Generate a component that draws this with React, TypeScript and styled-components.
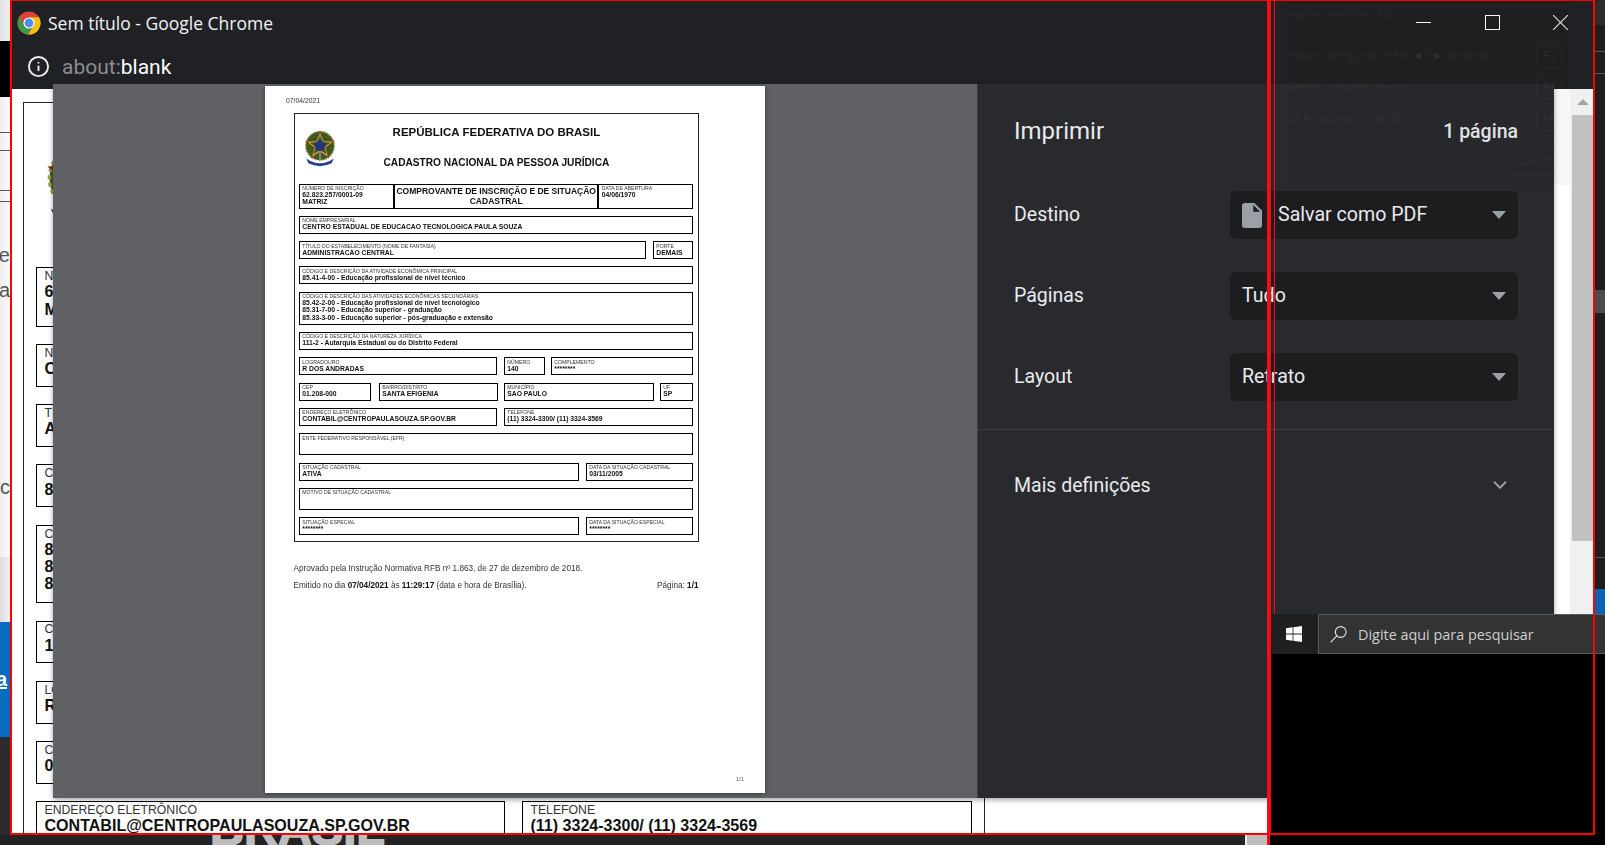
import React from 'react';
import styled, { createGlobalStyle } from 'styled-components';
import { ChevronDown, Info } from 'lucide-react';

const GlobalStyle = createGlobalStyle`
  html, body { margin: 0; padding: 0; background: #222; overflow: hidden; }
  * { box-sizing: border-box; }
`;

const Desktop = styled.div`
  position: relative;
  width: 1605px;
  height: 845px;
  overflow: hidden;
  background: #232323;
  font-family: "Liberation Sans", Arial, sans-serif;
`;

/* windows peeking out behind the chrome popup */
const LeftWindow = styled.div`
  position: absolute;
  left: 0;
  top: 0;
  width: 12px;
  height: 845px;
  display: flex;
  flex-direction: column;
  overflow: hidden;
`;

const LeftBand = styled.div<{ $h: number; $bg: string }>`
  flex: 0 0 ${(p) => p.$h}px;
  background: ${(p) => p.$bg};
`;

const LeftPage = styled.div`
  flex: 0 0 460px;
  background: linear-gradient(90deg, #eeeeee, #ffffff);
  display: flex;
  flex-direction: column;
  padding-top: 35px;
`;

const LeftRule = styled.div<{ $after: number }>`
  height: 1px;
  flex: none;
  background: #555;
  margin-bottom: ${(p) => p.$after}px;
`;

const LeftText = styled.div<{ $after: number }>`
  height: 24px;
  flex: none;
  width: 10px;
  display: flex;
  justify-content: flex-end;
  font-size: 20px;
  line-height: 24px;
  color: #555;
  white-space: nowrap;
  margin-bottom: ${(p) => p.$after}px;
`;

const LeftBlue = styled.div`
  flex: 0 0 115px;
  background: #0b6cbf;
  color: #fff;
  font-size: 20px;
  font-weight: 700;
  width: 100%;
  padding-top: 46px;
  display: flex;
  justify-content: flex-end;
  padding-right: 5px;
  text-decoration: underline;
`;

const RightWindow = styled.div`
  position: absolute;
  left: 1595px;
  top: 0;
  width: 10px;
  height: 614px;
  display: flex;
  flex-direction: column;
  background: #1e1e1e;
`;

const RightBand = styled.div<{ $h: number; $bg: string; $after?: number }>`
  flex: 0 0 ${(p) => p.$h}px;
  background: ${(p) => p.$bg};
  margin-bottom: ${(p) => p.$after ?? 0}px;
`;

const BottomStrip = styled.div`
  position: absolute;
  left: 0;
  top: 835px;
  width: 1270px;
  height: 10px;
  background: #232323;
  overflow: hidden;
  display: flex;
`;

const BrasilMark = styled.div`
  margin: -31px 0 0 210px;
  width: 1035px;
  flex: none;
  font-size: 47px;
  line-height: 50px;
  font-weight: 700;
  color: #bdbdbd;
  -webkit-text-stroke: 1.5px #bdbdbd;
`;

const BottomThumb = styled.div`
  flex: 1;
  background: #bdbdbd;
  border-left: 2px solid #eee;
`;

/* the chrome print popup */
const ChromeWindow = styled.div`
  position: absolute;
  left: 12px;
  top: 0;
  width: 1581px;
  height: 834px;
  display: flex;
  flex-direction: column;
  background: #202124;
  color: #e8eaed;
`;

const TitleBar = styled.div`
  flex: 0 0 45px;
  display: flex;
  align-items: center;
  padding-left: 5px;
  border-bottom: 1px solid #232427;
`;

const ChromeLogo = styled.svg`
  width: 24px;
  height: 24px;
  flex: none;
`;

const WindowTitle = styled.div`
  margin-left: 7px;
  font-family: "Open Sans", "Noto Sans", sans-serif;
  font-size: 17.5px;
  color: #f1f3f4;
  flex: 1;
`;

const WindowControls = styled.div`
  display: flex;
  margin-right: -2px;
`;

const ControlButton = styled.div`
  width: 68.5px;
  height: 45px;
  display: flex;
  align-items: center;
  justify-content: center;
  padding-bottom: 1px;
`;

const UrlBar = styled.div`
  flex: 0 0 43px;
  display: flex;
  align-items: center;
  padding-left: 15px;
  gap: 12px;
  padding-bottom: 2px;
`;

const UrlText = styled.div`
  font-family: Roboto, sans-serif;
  font-size: 21px;
  color: #8a8d91;
`;

const UrlHost = styled.span`
  color: #ffffff;
`;

const WindowBody = styled.div`
  flex: 1;
  position: relative;
  display: flex;
  min-height: 0;
`;

const DocumentPage = styled.div`
  flex: 1;
  background: #fff;
  overflow: hidden;
  padding: 13px 0 0 11px;
`;

const ScrollColumn = styled.div`
  flex: 0 0 23px;
  background: #f0f0f0;
  display: flex;
  flex-direction: column;
  align-items: flex-end;
`;

const ScrollArrow = styled.div`
  flex: 0 0 26px;
  width: 21px;
  display: flex;
  align-items: center;
  justify-content: center;
  &::before {
    content: '';
    border-left: 6px solid transparent;
    border-right: 6px solid transparent;
    border-bottom: 6px solid #a3a3a3;
  }
`;

const ScrollThumb = styled.div`
  flex: 0 0 426px;
  width: 21px;
  background: #c1c1c1;
`;

const PrintDialog = styled.div`
  position: absolute;
  left: 41px;
  top: -5px;
  width: 1501px;
  height: 714px;
  display: flex;
  box-shadow: 0 2px 5px rgba(0, 0, 0, 0.35);
`;

const PreviewPane = styled.div`
  flex: 0 0 924px;
  background: #5f6165;
  display: flex;
  justify-content: center;
  padding-top: 2px;
`;

const Sheet = styled.div`
  width: 500px;
  height: 707px;
  background: #fff;
  padding: 11px 0 0 21px;
  box-shadow: 0 1px 4px rgba(0, 0, 0, 0.4);
  color: #111;
  position: relative;
  filter: blur(0.35px);
`;

const SheetDate = styled.div`
  font-size: 6.8px;
  line-height: 8px;
  height: 16px;
  color: #333;
`;

const SheetFooter = styled.div`
  width: 406px;
  margin: 0 0 0 7.5px;
  font-size: 8.2px;
  color: #333;
`;

const FooterLine = styled.div`
  height: 17px;
  line-height: 17px;
  display: flex;
  justify-content: space-between;
  padding-right: 1px;
  b { color: #111; }
`;

const FooterGap = styled.div`
  height: 18px;
`;

const SheetNumber = styled.div`
  position: absolute;
  right: 21px;
  bottom: 11px;
  font-size: 6px;
  color: #666;
`;

const Sidebar = styled.div`
  flex: 1;
  background: #292a2d;
  border-left: 1px solid #3b3d41;
  padding-top: 23px;
  font-family: Roboto, sans-serif;
  color: #e8eaed;
  display: flex;
  flex-direction: column;
`;

const SidebarHeader = styled.div`
  height: 48px;
  display: flex;
  align-items: center;
  justify-content: space-between;
  padding: 0 36px;
`;

const SidebarTitle = styled.div`
  font-size: 24px;
`;

const PageCount = styled.div`
  font-size: 19.5px;
  font-weight: 500;
`;

const SettingsList = styled.div`
  margin-top: 36px;
  padding: 0 36px;
  display: flex;
  flex-direction: column;
  gap: 33px;
`;

const SettingRow = styled.div`
  height: 48px;
  display: grid;
  grid-template-columns: 216px 1fr;
  align-items: center;
  font-size: 19.5px;
`;

const SettingLabel = styled.div`
  padding-bottom: 2px;
`;

const SelectBox = styled.div`
  height: 48px;
  border-radius: 6px;
  background: #1d1d1f;
  display: flex;
  align-items: center;
  padding: 0 12px;
  font-size: 19.6px;
  color: #e8eaed;
`;

const FileIcon = styled.svg`
  width: 20px;
  height: 25px;
  margin-right: 16px;
  flex: none;
`;

const SelectText = styled.div`
  flex: 1;
  margin-bottom: 2px;
`;

const SelectArrow = styled.div`
  border-left: 7px solid transparent;
  border-right: 7px solid transparent;
  border-top: 8px solid #9aa0a6;
`;

const Divider = styled.div`
  height: 1px;
  margin-top: 28px;
  background: #3b3d41;
`;

const MoreRow = styled.div`
  height: 110px;
  display: flex;
  align-items: center;
  justify-content: space-between;
  padding: 0 43px 0 36px;
  font-size: 19.5px;
`;

/* the receipt, used for the page behind and for the preview sheet */
const FormBox = styled.div`
  --rule: 1px;
  --outer: 1.6px;
  --head: 69.6px;
  --box-w: 405.8px;
  --inset: 0px;
  --pad: 2.6px;
  width: var(--box-w);
  border: var(--outer) solid #222;
  margin-left: 7.5px;
  color: #111;
  height: 428.5px;
`;

const PageFormBox = styled(FormBox)`
  --rule: 0.42px;
  --outer: 0.84px;
  --head: 69px;
  --box-w: 404.4px;
  --inset: 0.8px;
  --pad: 3.2px;
  zoom: 2.38;
  margin-left: 0;
`;

const FormHead = styled.div`
  height: var(--head);
  display: grid;
  grid-template-columns: 48px 1fr 48px;
`;

const CoatOfArms = styled.svg`
  width: 34px;
  height: 36px;
  margin: 17px 0 0 8px;
`;

const FormTitle = styled.div`
  text-align: center;
  font-weight: 700;
  font-size: 11.5px;
  padding-top: 12px;
  line-height: 12px;
`;

const FormSubtitle = styled.div`
  margin-top: 19px;
  font-size: 10.15px;
`;

const FormRows = styled.div`
  width: 394px;
  margin-left: 4.2px;
  display: flex;
  flex-direction: column;
  gap: 7.3px;
`;

const FormRow = styled.div<{ $h: number }>`
  height: ${(p) => p.$h}px;
  display: flex;
`;

const FormField = styled.div<{ $w?: number; $gap?: number }>`
  flex: ${(p) => (p.$w ? `0 0 ${p.$w}px` : '1 1 0')};
  margin-left: ${(p) => p.$gap ?? 0}px;
  border: var(--rule) solid #000;
  padding: 0.4px 0 0 var(--pad);
  min-width: 0;
  overflow: hidden;
  &:first-child {
    flex: ${(p) => (p.$w ? `0 0 calc(${p.$w}px - var(--inset))` : '1 1 0')};
    margin-left: var(--inset);
  }
`;

const FieldLabel = styled.div`
  font-size: 5.15px;
  line-height: 6px;
  color: #333;
  white-space: nowrap;
`;

const FieldValue = styled.div`
  font-size: 6.75px;
  line-height: 7.2px;
  font-weight: 700;
  white-space: nowrap;
  color: #111;
`;

const ReceiptHeading = styled(FormField)`
  font-weight: 700;
  font-size: 8.5px;
  line-height: 10px;
  text-align: center;
  padding: 1.5px 0 0;
`;

const arms = (
  <CoatOfArms viewBox="0 0 32 34">
    <circle cx="16" cy="14" r="13.5" fill="#3d5a24" stroke="#a89a3c" strokeWidth="1.4" strokeDasharray="1.5 1.5" />
    <polygon points="16,0 19.5,9.1 29.3,9.7 21.7,15.9 24.2,25.3 16,20 7.8,25.3 10.3,15.9 2.7,9.7 12.5,9.1" fill="#c2a52e" stroke="#7a2f1c" strokeWidth="0.8" />
    <polygon points="16,4 18.6,10.5 25.5,11 20.2,15.2 22,21.8 16,18 10,21.8 11.8,15.2 6.5,11 13.4,10.5" fill="#2d5a2c" />
    <circle cx="16" cy="14" r="5" fill="#26357f" />
    <rect x="15.2" y="19" width="1.6" height="9" fill="#8c8c8c" />
    <path d="M3 26 Q16 35 29 26 L27 30.5 Q16 36 5 30.5 Z" fill="#2b3f90" />
  </CoatOfArms>
);

function ReceiptContent() {
  return (
    <>
      <FormHead>
        {arms}
        <FormTitle>
          REPÚBLICA FEDERATIVA DO BRASIL
          <FormSubtitle>CADASTRO NACIONAL DA PESSOA JURÍDICA</FormSubtitle>
        </FormTitle>
        <div />
      </FormHead>
      <FormRows>
        <FormRow $h={25}>
          <FormField $w={95.5}>
            <FieldLabel>NÚMERO DE INSCRIÇÃO</FieldLabel>
            <FieldValue>62.823.257/0001-09</FieldValue>
            <FieldValue>MATRIZ</FieldValue>
          </FormField>
          <ReceiptHeading $w={204}>
            COMPROVANTE DE INSCRIÇÃO E DE SITUAÇÃO
            <br />
            CADASTRAL
          </ReceiptHeading>
          <FormField>
            <FieldLabel>DATA DE ABERTURA</FieldLabel>
            <FieldValue>04/06/1970</FieldValue>
          </FormField>
        </FormRow>
        <FormRow $h={18}>
          <FormField>
            <FieldLabel>NOME EMPRESARIAL</FieldLabel>
            <FieldValue>CENTRO ESTADUAL DE EDUCACAO TECNOLOGICA PAULA SOUZA</FieldValue>
          </FormField>
        </FormRow>
        <FormRow $h={18}>
          <FormField>
            <FieldLabel>TÍTULO DO ESTABELECIMENTO (NOME DE FANTASIA)</FieldLabel>
            <FieldValue>ADMINISTRACAO CENTRAL</FieldValue>
          </FormField>
          <FormField $w={40} $gap={7}>
            <FieldLabel>PORTE</FieldLabel>
            <FieldValue>DEMAIS</FieldValue>
          </FormField>
        </FormRow>
        <FormRow $h={18}>
          <FormField>
            <FieldLabel>CÓDIGO E DESCRIÇÃO DA ATIVIDADE ECONÔMICA PRINCIPAL</FieldLabel>
            <FieldValue>85.41-4-00 - Educação profissional de nível técnico</FieldValue>
          </FormField>
        </FormRow>
        <FormRow $h={33}>
          <FormField>
            <FieldLabel>CÓDIGO E DESCRIÇÃO DAS ATIVIDADES ECONÔMICAS SECUNDÁRIAS</FieldLabel>
            <FieldValue>85.42-2-00 - Educação profissional de nível tecnológico</FieldValue>
            <FieldValue>85.31-7-00 - Educação superior - graduação</FieldValue>
            <FieldValue>85.33-3-00 - Educação superior - pós-graduação e extensão</FieldValue>
          </FormField>
        </FormRow>
        <FormRow $h={18}>
          <FormField>
            <FieldLabel>CÓDIGO E DESCRIÇÃO DA NATUREZA JURÍDICA</FieldLabel>
            <FieldValue>111-2 - Autarquia Estadual ou do Distrito Federal</FieldValue>
          </FormField>
        </FormRow>
        <FormRow $h={18}>
          <FormField $w={198}>
            <FieldLabel>LOGRADOURO</FieldLabel>
            <FieldValue>R DOS ANDRADAS</FieldValue>
          </FormField>
          <FormField $w={41} $gap={7}>
            <FieldLabel>NÚMERO</FieldLabel>
            <FieldValue>140</FieldValue>
          </FormField>
          <FormField $gap={6}>
            <FieldLabel>COMPLEMENTO</FieldLabel>
            <FieldValue>********</FieldValue>
          </FormField>
        </FormRow>
        <FormRow $h={18}>
          <FormField $w={72}>
            <FieldLabel>CEP</FieldLabel>
            <FieldValue>01.208-000</FieldValue>
          </FormField>
          <FormField $w={119} $gap={8}>
            <FieldLabel>BAIRRO/DISTRITO</FieldLabel>
            <FieldValue>SANTA EFIGENIA</FieldValue>
          </FormField>
          <FormField $w={150} $gap={6}>
            <FieldLabel>MUNICÍPIO</FieldLabel>
            <FieldValue>SAO PAULO</FieldValue>
          </FormField>
          <FormField $gap={6}>
            <FieldLabel>UF</FieldLabel>
            <FieldValue>SP</FieldValue>
          </FormField>
        </FormRow>
        <FormRow $h={18}>
          <FormField $w={198}>
            <FieldLabel>ENDEREÇO ELETRÔNICO</FieldLabel>
            <FieldValue>CONTABIL@CENTROPAULASOUZA.SP.GOV.BR</FieldValue>
          </FormField>
          <FormField $gap={7}>
            <FieldLabel>TELEFONE</FieldLabel>
            <FieldValue>(11) 3324-3300/ (11) 3324-3569</FieldValue>
          </FormField>
        </FormRow>
        <FormRow $h={22}>
          <FormField>
            <FieldLabel>ENTE FEDERATIVO RESPONSÁVEL (EFR)</FieldLabel>
          </FormField>
        </FormRow>
        <FormRow $h={18}>
          <FormField $w={280}>
            <FieldLabel>SITUAÇÃO CADASTRAL</FieldLabel>
            <FieldValue>ATIVA</FieldValue>
          </FormField>
          <FormField $gap={7}>
            <FieldLabel>DATA DA SITUAÇÃO CADASTRAL</FieldLabel>
            <FieldValue>03/11/2005</FieldValue>
          </FormField>
        </FormRow>
        <FormRow $h={22}>
          <FormField>
            <FieldLabel>MOTIVO DE SITUAÇÃO CADASTRAL</FieldLabel>
          </FormField>
        </FormRow>
        <FormRow $h={18}>
          <FormField $w={280}>
            <FieldLabel>SITUAÇÃO ESPECIAL</FieldLabel>
            <FieldValue>********</FieldValue>
          </FormField>
          <FormField $gap={7}>
            <FieldLabel>DATA DA SITUAÇÃO ESPECIAL</FieldLabel>
            <FieldValue>********</FieldValue>
          </FormField>
        </FormRow>
      </FormRows>
    </>
  );
}

/* faint dialog showing through the window */
const GhostPanel = styled.div`
  position: absolute;
  left: 1288px;
  top: 0;
  width: 282px;
  height: 185px;
  background: rgba(0, 0, 0, 0.03);
  padding: 4px 8px 0 0;
  font-family: "Open Sans", "Noto Sans", sans-serif;
  font-size: 10.9px;
  word-spacing: 1px;
  color: rgba(255, 255, 255, 0.065);
`;

const GhostLine = styled.div`
  height: 35px;
  line-height: 20px;
`;

const GhostRow = styled.div`
  height: 31.5px;
  display: flex;
  align-items: center;
  justify-content: space-between;
`;

const GhostKey = styled.div`
  width: 26px;
  height: 26px;
  border: 1px solid rgba(255, 255, 255, 0.035);
  border-radius: 3px;
  display: flex;
  align-items: center;
  justify-content: center;
`;

const GhostCancel = styled.div`
  margin: 14px 0 0 auto;
  width: 56px;
  height: 26px;
  line-height: 24px;
  text-align: center;
  border: 1px solid rgba(255, 255, 255, 0.02);
  border-radius: 3px;
`;

/* taskbar and the black area under it */
const TaskArea = styled.div`
  position: absolute;
  left: 1270px;
  top: 614px;
  width: 335px;
  height: 231px;
  display: flex;
  flex-direction: column;
  background: #000;
`;

const Taskbar = styled.div`
  flex: 0 0 40px;
  display: flex;
`;

const StartButton = styled.div`
  flex: 0 0 48px;
  background: #202020;
  display: flex;
  align-items: center;
  justify-content: center;
`;

const SearchBox = styled.div`
  flex: 1;
  background: #333333;
  border: 1px solid #5b5b5b;
  border-right: none;
  display: flex;
  align-items: center;
  padding-left: 11px;
  gap: 11px;
  font-family: "Open Sans", "Noto Sans", sans-serif;
  font-size: 14.4px;
  color: #cfcfcf;
`;

const RedFrame = styled.div<{ $l: number; $w: number; $h: number; $t?: number }>`
  position: absolute;
  left: ${(p) => p.$l}px;
  top: 0;
  width: ${(p) => p.$w}px;
  height: ${(p) => p.$h}px;
  border: 2px solid #ff0000;
  border-top-width: ${(p) => p.$t ?? 2}px;
  pointer-events: none;
`;

const RedRule = styled.div<{ $l: number; $w: number; $h: number }>`
  position: absolute;
  left: ${(p) => p.$l}px;
  top: 0;
  width: ${(p) => p.$w}px;
  height: ${(p) => p.$h}px;
  background: #ee0f17;
`;

function SelectRow({ label, value, file }: { label: string; value: string; file?: boolean }) {
  return (
    <SettingRow>
      <SettingLabel>{label}</SettingLabel>
      <SelectBox>
        {file && (
          <FileIcon viewBox="4 2 16 20">
            <path
              fillRule="evenodd"
              fill="#9aa0a6"
              d="M6 2c-1.1 0-2 .9-2 2v16c0 1.1.9 2 2 2h12c1.1 0 2-.9 2-2V8l-6-6H6zm7 7V3.5L18.5 9H13z"
            />
          </FileIcon>
        )}
        <SelectText>{value}</SelectText>
        <SelectArrow />
      </SelectBox>
    </SettingRow>
  );
}

export default function App() {
  return (
    <Desktop>
      <GlobalStyle />
      <LeftWindow>
        <LeftBand $h={41} $bg="linear-gradient(90deg, #e2e2e2, #f4f4f4)" />
        <LeftBand $h={56} $bg="#000" />
        <LeftPage>
          <LeftRule $after={17} />
          <LeftRule $after={39} />
          <LeftRule $after={10} />
          <LeftRule $after={41} />
          <LeftText $after={11}>de</LeftText>
          <LeftText $after={173}>a</LeftText>
          <LeftText $after={0}>c</LeftText>
        </LeftPage>
        <LeftBand $h={65} $bg="linear-gradient(90deg, #dcdcdc, #f6f6f6)" />
        <LeftBlue>a</LeftBlue>
        <LeftBand $h={108} $bg="#2b2b2b" />
      </LeftWindow>

      <RightWindow>
        <RightBand $h={25} $bg="#2c2c2c" $after={26} />
        <RightBand $h={1} $bg="#555" $after={21} />
        <RightBand $h={1} $bg="#555" $after={216} />
        <RightBand $h={23} $bg="#4a4c50" $after={244} />
        <RightBand $h={1} $bg="#555" $after={31} />
        <RightBand $h={25} $bg="#0f62ad" />
      </RightWindow>

      <BottomStrip>
        <BrasilMark>BRASIL</BrasilMark>
        <BottomThumb />
      </BottomStrip>

      <ChromeWindow>
        <TitleBar>
          <ChromeLogo viewBox="0 0 24 24">
            <circle cx="12" cy="12" r="11.5" fill="#db4437" />
            <path d="M21.96 6.25A11.5 11.5 0 0 1 11 23.46L16.76 14.75 12 6.5z" fill="#f4c20d" />
            <path d="M2.4 5.7A11.5 11.5 0 0 0 11 23.46L15.6 15.6 7.24 14.75z" fill="#3b9a4b" />
            <circle cx="12" cy="12" r="5.6" fill="#fff" />
            <circle cx="12" cy="12" r="4.4" fill="#4f8ef0" />
          </ChromeLogo>
          <WindowTitle>Sem título - Google Chrome</WindowTitle>
          <WindowControls>
            <ControlButton>
              <svg width="15" height="15" viewBox="0 0 15 15">
                <path d="M0 7.5h15" stroke="#fff" strokeWidth="1" />
              </svg>
            </ControlButton>
            <ControlButton>
              <svg width="15" height="15" viewBox="0 0 15 15">
                <rect x="0.5" y="0.5" width="14" height="14" fill="none" stroke="#fff" strokeWidth="1" />
              </svg>
            </ControlButton>
            <ControlButton>
              <svg width="15" height="15" viewBox="0 0 15 15">
                <path d="M0 0l15 15M15 0L0 15" stroke="#e8e8e8" strokeWidth="1.1" />
              </svg>
            </ControlButton>
          </WindowControls>
        </TitleBar>
        <UrlBar>
          <Info size={23} strokeWidth={2} color="#e8eaed" />
          <UrlText>
            about:<UrlHost>blank</UrlHost>
          </UrlText>
        </UrlBar>
        <WindowBody>
          <DocumentPage>
            <PageFormBox>
              <ReceiptContent />
            </PageFormBox>
          </DocumentPage>
          <ScrollColumn>
            <ScrollArrow />
            <ScrollThumb />
          </ScrollColumn>
          <PrintDialog>
            <PreviewPane>
              <Sheet>
                <SheetDate>07/04/2021</SheetDate>
                <FormBox>
                  <ReceiptContent />
                </FormBox>
                <SheetFooter>
                  <FooterGap />
                  <FooterLine>Aprovado pela Instrução Normativa RFB nº 1.863, de 27 de dezembro de 2018.</FooterLine>
                  <FooterLine>
                    <span>
                      Emitido no dia <b>07/04/2021</b> às <b>11:29:17</b> (data e hora de Brasília).
                    </span>
                    <span>
                      Página: <b>1/1</b>
                    </span>
                  </FooterLine>
                </SheetFooter>
                <SheetNumber>1/1</SheetNumber>
              </Sheet>
            </PreviewPane>
            <Sidebar>
              <SidebarHeader>
                <SidebarTitle>Imprimir</SidebarTitle>
                <PageCount>1 página</PageCount>
              </SidebarHeader>
              <SettingsList>
                <SelectRow label="Destino" value="Salvar como PDF" file />
                <SelectRow label="Páginas" value="Tudo" />
                <SelectRow label="Layout" value="Retrato" />
              </SettingsList>
              <Divider />
              <MoreRow>
                Mais definições
                <ChevronDown size={22} strokeWidth={2} color="#9aa0a6" />
              </MoreRow>
            </Sidebar>
          </PrintDialog>
        </WindowBody>
      </ChromeWindow>

      <GhostPanel>
        <GhostLine>region selection (F3).</GhostLine>
        <GhostRow>
          Pause configuration for ◀ 5 ▶ seconds
          <GhostKey>F2</GhostKey>
        </GhostRow>
        <GhostRow>
          Region selection mode
          <GhostKey>F3</GhostKey>
        </GhostRow>
        <GhostRow>
          UI Framework: Default
          <GhostKey>F4</GhostKey>
        </GhostRow>
        <GhostCancel>Cancel</GhostCancel>
      </GhostPanel>

      <TaskArea>
        <Taskbar>
          <StartButton>
            <svg width="16" height="16" viewBox="0 0 16 16">
              <path d="M0 2.3L6.6 1.3V7.5H0zM7.4 1.2L16 0V7.5H7.4zM0 8.4H6.6V14.7L0 13.7zM7.4 8.4H16V16L7.4 14.8z" fill="#fff" />
            </svg>
          </StartButton>
          <SearchBox>
            <svg width="17" height="17" viewBox="0 0 17 17" fill="none" stroke="#e6e6e6" strokeWidth="1.1">
              <circle cx="10.7" cy="6" r="5.4" />
              <path d="M6.8 9.9L0.6 16.4" />
            </svg>
            Digite aqui para pesquisar
          </SearchBox>
        </Taskbar>
      </TaskArea>

      <RedFrame $l={10} $w={1260} $h={835} $t={1} />
      <RedFrame $l={1269} $w={326} $h={835} $t={1} />
      <RedRule $l={1267} $w={3} $h={845} />
      <RedRule $l={1274} $w={1} $h={614} />
    </Desktop>
  );
}
